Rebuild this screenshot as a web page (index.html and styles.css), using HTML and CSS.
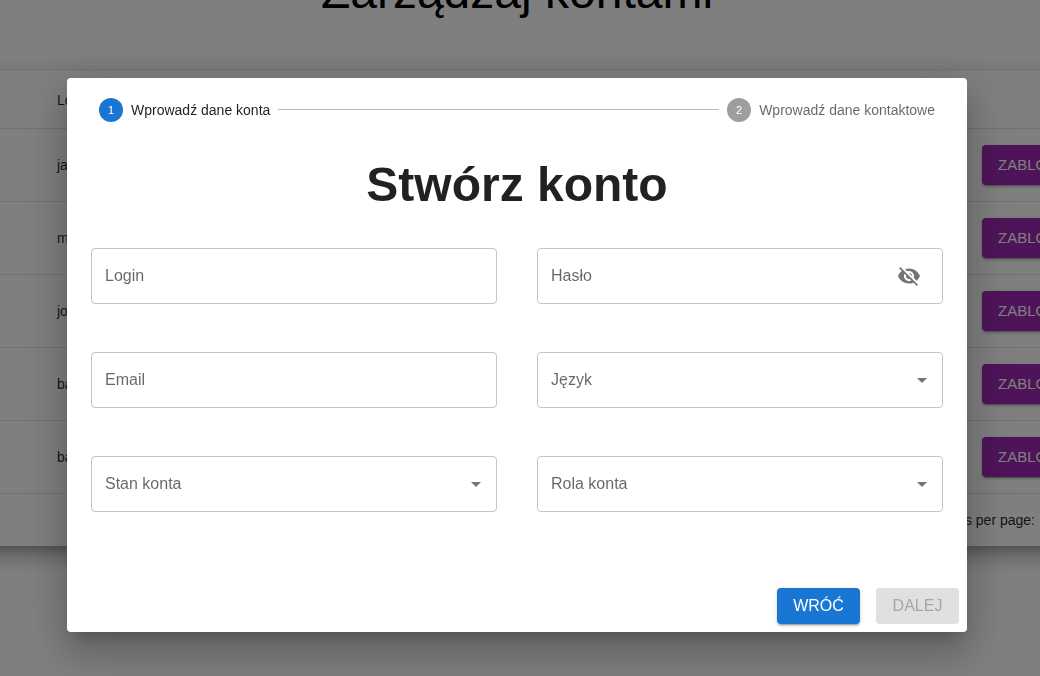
FILE: index.html
```html
<!DOCTYPE html>
<html lang="pl">
<head>
<meta charset="utf-8">
<title>Zarządzaj kontami</title>
<link rel="stylesheet" href="styles.css">
</head>
<body>
<main class="page">
  <h1 class="page-title">Zarządzaj kontami</h1>
  <section class="panel">
    <table class="accounts">
      <thead>
        <tr><th class="login-cell" scope="col">Login</th><td class="action-cell"></td></tr>
      </thead>
      <tbody>
        <tr><td class="login-cell">jan</td><td class="action-cell"><button class="block-button" type="button">ZABLOKUJ</button></td></tr>
        <tr><td class="login-cell">ma</td><td class="action-cell"><button class="block-button" type="button">ZABLOKUJ</button></td></tr>
        <tr><td class="login-cell">jo</td><td class="action-cell"><button class="block-button" type="button">ZABLOKUJ</button></td></tr>
        <tr><td class="login-cell">ba</td><td class="action-cell"><button class="block-button" type="button">ZABLOKUJ</button></td></tr>
        <tr><td class="login-cell">ba</td><td class="action-cell"><button class="block-button" type="button">ZABLOKUJ</button></td></tr>
      </tbody>
    </table>
    <div class="pagination">Rows per page:</div>
  </section>
</main>

<div class="backdrop">
  <form class="dialog" role="dialog" aria-modal="true" aria-labelledby="dialog-title">
    <div class="dialog-body">
      <ol class="stepper">
        <li class="step step-active"><span class="step-icon">1</span><span>Wprowadź dane konta</span></li>
        <li class="step-line" aria-hidden="true"></li>
        <li class="step"><span class="step-icon">2</span><span>Wprowadź dane kontaktowe</span></li>
      </ol>
      <h2 class="dialog-title" id="dialog-title">Stwórz konto</h2>
      <div class="fields">
        <div class="field">
          <input class="control" id="login" type="text">
          <label class="label" for="login">Login</label>
        </div>
        <div class="field">
          <input class="control" id="password" type="password">
          <label class="label" for="password">Hasło</label>
          <button class="eye-button" type="button" aria-label="Pokaż hasło">
            <svg class="icon" viewBox="0 0 24 24"><path d="M12 7c2.76 0 5 2.24 5 5 0 .65-.13 1.26-.36 1.83l2.92 2.92c1.51-1.26 2.7-2.89 3.43-4.75-1.73-4.39-6-7.5-11-7.5-1.4 0-2.74.25-3.98.7l2.16 2.16C10.74 7.13 11.35 7 12 7zM2 4.27l2.28 2.28.46.46C3.08 8.3 1.78 10.02 1 12c1.73 4.39 6 7.5 11 7.5 1.55 0 3.03-.3 4.38-.84l.42.42L19.73 22 21 20.73 3.27 3 2 4.27zM7.53 9.8l1.55 1.55c-.05.21-.08.43-.08.65 0 1.66 1.34 3 3 3 .22 0 .44-.03.65-.08l1.55 1.55c-.67.33-1.41.53-2.2.53-2.76 0-5-2.24-5-5 0-.79.2-1.53.53-2.2zm4.31-.78l3.15 3.15.02-.16c0-1.66-1.34-3-3-3l-.17.01z"/></svg>
          </button>
        </div>
        <div class="field">
          <input class="control" id="email" type="email">
          <label class="label" for="email">Email</label>
        </div>
        <div class="field">
          <select class="control" id="language"><option value=""></option></select>
          <label class="label" for="language">Język</label>
          <svg class="icon arrow" viewBox="0 0 24 24"><path d="M7 10l5 5 5-5z"/></svg>
        </div>
        <div class="field">
          <select class="control" id="state"><option value=""></option></select>
          <label class="label" for="state">Stan konta</label>
          <svg class="icon arrow" viewBox="0 0 24 24"><path d="M7 10l5 5 5-5z"/></svg>
        </div>
        <div class="field">
          <select class="control" id="role"><option value=""></option></select>
          <label class="label" for="role">Rola konta</label>
          <svg class="icon arrow" viewBox="0 0 24 24"><path d="M7 10l5 5 5-5z"/></svg>
        </div>
      </div>
    </div>
    <div class="actions">
      <button class="button button-primary" type="button">WRÓĆ</button>
      <button class="button" type="submit" disabled>DALEJ</button>
    </div>
  </form>
</div>
</body>
</html>
```
FILE: styles.css
```css
* {
  box-sizing: border-box;
}

body {
  margin: 0;
  background: #fff;
  color: rgba(0, 0, 0, 0.87);
  font-family: "Liberation Sans", Arial, sans-serif;
  font-size: 14px;
  line-height: 20px;
}

button,
input,
select {
  font-family: inherit;
}

.page {
  height: 100vh;
  padding-right: 6px;
  overflow: hidden;
}

.page-title {
  margin: -36px 0 51px;
  color: #000;
  font-size: 48px;
  font-weight: 400;
  line-height: 56px;
  text-align: center;
}

.panel {
  margin: 0 -80px;
  border-radius: 4px;
  background: #fff;
  box-shadow: 0 7px 8px -4px rgba(0, 0, 0, 0.2), 0 12px 17px 2px rgba(0, 0, 0, 0.14), 0 5px 22px 4px rgba(0, 0, 0, 0.12);
}

.accounts {
  width: 100%;
  border-collapse: separate;
  border-spacing: 0;
}

.accounts th,
.accounts td {
  height: 58px;
  padding: 0;
  border-bottom: 1px solid #e0e0e0;
  font-weight: 400;
  text-align: left;
}

.accounts tbody td {
  height: 73px;
}

.accounts .login-cell {
  padding-left: 137px;
}

.accounts .action-cell {
  width: 132px;
}

.block-button {
  display: block;
  height: 40px;
  padding: 0 16px 2px;
  border: 0;
  border-radius: 4px;
  background: #9c27b0;
  color: #fff;
  font-size: 15px;
  box-shadow: 0 3px 1px -2px rgba(0, 0, 0, 0.2), 0 2px 2px 0 rgba(0, 0, 0, 0.14), 0 1px 5px 0 rgba(0, 0, 0, 0.12);
}

.pagination {
  display: flex;
  align-items: center;
  justify-content: flex-end;
  height: 52px;
  padding-right: 79px;
}

.backdrop {
  position: fixed;
  inset: 0;
  display: flex;
  align-items: flex-start;
  justify-content: center;
  padding: 78px 38px 32px 32px;
  overflow: auto;
  background: rgba(0, 0, 0, 0.5);
}

.dialog {
  width: 100%;
  max-width: 900px;
  border-radius: 4px;
  background: #fff;
  box-shadow: 0 11px 15px -7px rgba(0, 0, 0, 0.2), 0 24px 38px 3px rgba(0, 0, 0, 0.14), 0 9px 46px 8px rgba(0, 0, 0, 0.12);
}

.dialog-body {
  padding: 20px 24px 68px;
}

.stepper {
  display: flex;
  align-items: center;
  gap: 8px;
  margin: 0;
  padding: 0 8px;
  list-style: none;
}

.step {
  display: flex;
  align-items: center;
  gap: 8px;
  color: rgba(0, 0, 0, 0.6);
}

.step-active {
  color: rgba(0, 0, 0, 0.87);
}

.step-icon {
  display: flex;
  align-items: center;
  justify-content: center;
  width: 24px;
  height: 24px;
  border-radius: 50%;
  background: #9e9e9e;
  color: #fff;
  font-size: 11px;
}

.step-active .step-icon {
  background: #1976d2;
}

.step-line {
  flex: 1;
  height: 2px;
  border-top: 1px solid #bdbdbd;
}

.dialog-title {
  margin: 35px 0;
  font-size: 48px;
  line-height: 56px;
  text-align: center;
}

.fields {
  display: grid;
  grid-template-columns: 1fr 1fr;
  gap: 48px 40px;
}

.field {
  display: grid;
  align-items: center;
}

.field > * {
  grid-area: 1 / 1;
}

.control {
  width: 100%;
  height: 56px;
  padding: 0 14px;
  border: 1px solid #c4c4c4;
  border-radius: 4px;
  background: #fff;
  color: inherit;
  font-size: 16px;
  appearance: none;
}

.label {
  justify-self: start;
  padding: 0 14px;
  color: rgba(0, 0, 0, 0.6);
  font-size: 16px;
  pointer-events: none;
}

.icon {
  display: block;
  width: 24px;
  height: 24px;
  fill: rgba(0, 0, 0, 0.54);
}

.arrow {
  justify-self: end;
  margin-right: 9px;
  pointer-events: none;
}

.eye-button {
  justify-self: end;
  margin-right: 14px;
  padding: 8px;
  border: 0;
  background: none;
}

.actions {
  display: flex;
  justify-content: flex-end;
  gap: 16px;
  padding: 8px;
}

.button {
  min-width: 83px;
  height: 36px;
  padding: 0 16px;
  border: 0;
  border-radius: 4px;
  background: #e0e0e0;
  color: #a6a6a6;
  font-size: 16px;
}

.button-primary {
  background: #1976d2;
  color: #fff;
  box-shadow: 0 3px 1px -2px rgba(0, 0, 0, 0.2), 0 2px 2px 0 rgba(0, 0, 0, 0.14), 0 1px 5px 0 rgba(0, 0, 0, 0.12);
}
```
